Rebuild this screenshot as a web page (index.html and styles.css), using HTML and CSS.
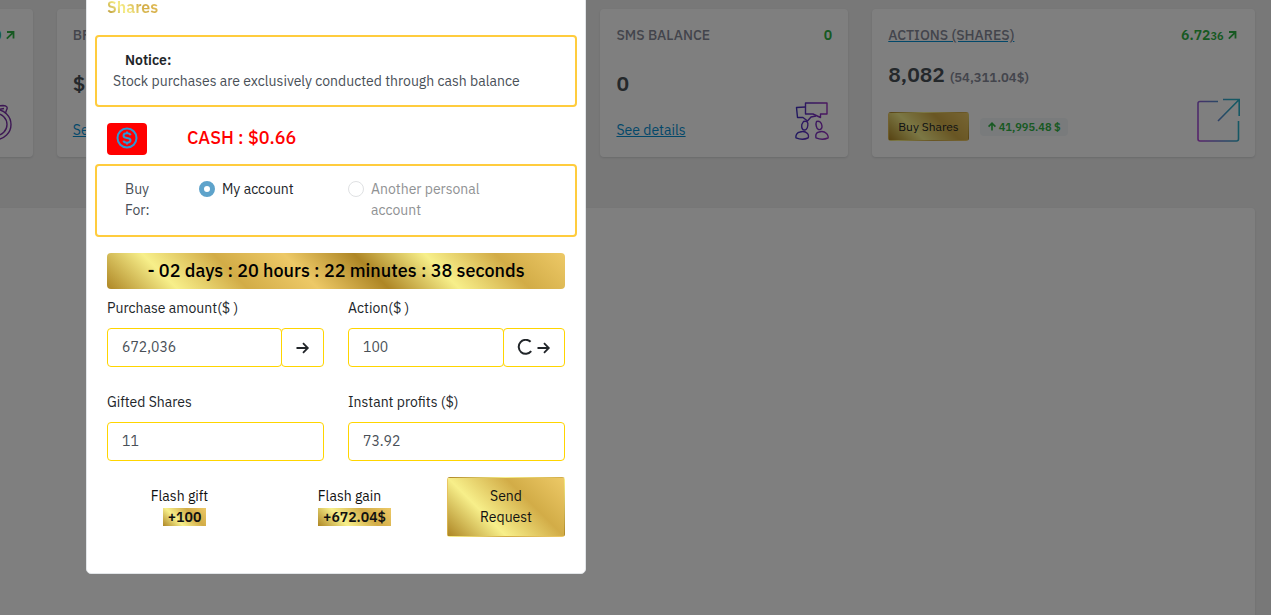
FILE: index.html
```html
<!DOCTYPE html>
<html lang="en">
<head>
<meta charset="utf-8">
<meta name="viewport" content="width=device-width, initial-scale=1">
<title>Shares</title>
<link rel="stylesheet" href="styles.css">
</head>
<body>
<svg class="defs" aria-hidden="true">
  <symbol id="arrow-right" viewBox="0 0 14 14"><path d="M1 7h11M7.500 2.200 12.300 7l-4.800 4.800" fill="none" stroke="currentColor" stroke-width="1.8"/></symbol>
  <symbol id="arrow-ne" viewBox="0 0 12 10"><path d="M2 2h6.500v6.500M8.200 2.300 1.800 8.700" fill="none" stroke="currentColor" stroke-width="1.8"/></symbol>
  <symbol id="arrow-up" viewBox="0 0 10 10"><path d="M5 9.500V1.500M1.200 5.200 5 1.400l3.800 3.800" fill="none" stroke="currentColor" stroke-width="1.8"/></symbol>
</svg>
<main class="page">
  <section class="stats">
    <article class="card">
      <header class="card-head end"><span class="trend">0 <svg class="trend-icon"><use href="#arrow-ne"/></svg></span></header>
      <footer class="card-foot end">
        <svg class="card-icon medal" viewBox="0 0 42 42" fill="none" stroke="#7a2fa8" stroke-width="1.4"><circle cx="21" cy="25.500" r="15"/><circle cx="21" cy="25.500" r="11"/><path d="M17 11C17 7.500 19 6.500 23 7L28 6.500C32 6.500 33 8.500 31.500 11L30.500 14M20 11 29 9.500"/></svg>
      </footer>
    </article>
    <article class="card">
      <header class="card-head"><h2 class="card-title">BFS</h2></header>
      <p class="amount">$</p>
      <footer class="card-foot"><a href="#">See</a></footer>
    </article>
    <article class="card"></article>
    <article class="card">
      <header class="card-head"><h2 class="card-title">SMS BALANCE</h2><span class="trend">0</span></header>
      <p class="amount">0</p>
      <footer class="card-foot"><a href="#">See details</a>
        <svg class="card-icon" viewBox="0 0 42 42" fill="none" stroke="url(#chat)" stroke-width="1.4" stroke-linejoin="round">
          <defs><linearGradient id="chat" gradientUnits="userSpaceOnUse" x1="4" y1="0" x2="38" y2="0"><stop offset="0" stop-color="#3a2fc0"/><stop offset="1" stop-color="#9a30c0"/></linearGradient></defs>
          <path d="M15.500 4H37V15H30.500L30.500 18.500 23 15H15.500Z"/>
          <path d="M15.500 8 6.500 8.500 7.500 18.500H13L17.500 22 21 18 26 17"/>
          <path d="M13.500 22.500C16.500 21.500 18.500 23 17.800 26.500 17.500 30 15.500 31.500 13.500 30.800 11.500 30 11.500 28 11.800 25.500Z"/>
          <path d="M26.500 22.500C29.500 21.500 31.500 23.500 32 27 32.300 29.500 30.500 31 28.500 30.500 26.500 30 25.300 25 26.500 22.500Z"/>
          <path d="M10 33C13 32 16 33 17.500 34.500 19 36 18.500 38.500 18 39 14 40.800 9.500 40.300 6 38.800 5.500 36 7 33.500 10 33Z"/>
          <path d="M29 33C32 32 35 33 36.500 34.500 38 36 38.500 38.500 38 39 34 40.800 29.500 40.300 26 38.800 25.500 36 26 33.500 29 33Z"/>
        </svg>
      </footer>
    </article>
    <article class="card">
      <header class="card-head"><h2 class="card-title"><a class="title-link" href="#">ACTIONS (SHARES)</a></h2><span class="trend">6.72<small>36</small> <svg class="trend-icon"><use href="#arrow-ne"/></svg></span></header>
      <p class="amount shares">8,082 <span class="amount-note">(54,311.04$)</span></p>
      <footer class="card-foot">
        <div class="share-actions"><button class="gold buy" type="button">Buy Shares</button><span class="badge"><svg class="badge-icon"><use href="#arrow-up"/></svg>41,995.48 $</span></div>
        <svg class="share-icon" viewBox="0 0 46 46" fill="none" stroke="url(#share)" stroke-width="1.6">
          <defs><linearGradient id="share" gradientUnits="userSpaceOnUse" x1="2" y1="34" x2="42" y2="24"><stop offset="0" stop-color="#b045d8"/><stop offset="1" stop-color="#2bb0c8"/></linearGradient></defs>
          <path d="M25 6.500H7Q5 6.500 5 8.500V44Q5 46 7 46H43.500Q45.500 46 45.500 44V26M30 4.500H46.200V21M46 4.800 25 26"/>
        </svg>
      </footer>
    </article>
  </section>
  <section class="panel"></section>
</main>

<div class="backdrop">
  <form class="modal" role="dialog" aria-labelledby="modal-title">
    <h1 class="modal-title"><span class="gold-text" id="modal-title">Shares</span></h1>
    <div class="box notice"><strong class="notice-title">Notice:</strong><p class="notice-text">Stock purchases are exclusively conducted through cash balance</p></div>
    <div class="cash">
      <span class="cash-icon"><svg class="coin" viewBox="0 0 24 24" fill="none" stroke="#2b9ad6" stroke-width="2"><circle cx="12" cy="12" r="9.500"/><path d="M15.500 9.200C15.200 7.900 14 7.300 12 7.300S8.500 8.200 8.500 9.700 9.800 11.700 12 12 15.500 12.800 15.500 14.300 14 16.700 12 16.700 8.700 16.100 8.500 14.700M12 5.500V7.500M12 16.500V18.500"/></svg></span>
      <strong class="cash-value">CASH : $0.66</strong>
    </div>
    <fieldset class="box buy-for" aria-label="Buy for">
      <span class="buy-label">Buy For:</span>
      <label class="choice mine"><input class="radio" type="radio" name="account" checked>My account</label>
      <label class="choice other"><input class="radio" type="radio" name="account" disabled>Another personal account</label>
    </fieldset>
    <div class="gold-band">- 02 days : 20 hours : 22 minutes : 38 seconds</div>
    <div class="fields">
      <div class="field"><label for="purchase">Purchase amount($ )</label><div class="group"><input class="control" id="purchase" value="672,036"><button class="addon" type="button" aria-label="Convert amount"><svg class="go"><use href="#arrow-right"/></svg></button></div></div>
      <div class="field"><label for="action">Action($ )</label><div class="group"><input class="control" id="action" value="100"><button class="addon" type="button" aria-label="Convert shares"><svg class="spinner" viewBox="0 0 16 18"><path d="M13.600 2.800A7 7 0 1 0 14.200 12.200" fill="none" stroke="currentColor" stroke-width="2"/></svg><svg class="go"><use href="#arrow-right"/></svg></button></div></div>
      <div class="field"><label for="gifted">Gifted Shares</label><div class="group"><input class="control" id="gifted" value="11"></div></div>
      <div class="field"><label for="profit">Instant profits ($)</label><div class="group"><input class="control" id="profit" value="73.92"></div></div>
    </div>
    <div class="summary">
      <div class="flash">Flash gift<b class="flash-value">+100</b></div>
      <div class="flash">Flash gain<b class="flash-value">+672.04$</b></div>
      <button class="gold send" type="submit">Send Request</button>
    </div>
  </form>
</div>
</body>
</html>
```
FILE: styles.css
```css
* { box-sizing: border-box; }
body {
  margin: 0;
  height: 100vh;
  overflow: hidden;
  background: #f0f0f0;
  color: #212529;
  font: 14px/21px "IBM Plex Sans", Inter, "Noto Sans", sans-serif;
}
h1, h2, p { margin: 0; }
button, input { font: inherit; color: inherit; }
a { color: #0590d4; }
.defs { position: absolute; width: 0; height: 0; }

.page {
  display: flex;
  flex-direction: column;
  height: 100vh;
  margin-left: -215px;
  padding: 9px 16px 0 0;
}
.stats {
  display: grid;
  grid-template-columns: repeat(4, 248fr) 383fr;
  gap: 24px;
  margin-bottom: 51px;
}
.card, .panel { background: #fff; border-radius: 4px; box-shadow: 0 1px 2px rgba(56, 65, 74, .15); }
.card {
  display: flex;
  flex-direction: column;
  justify-content: space-between;
  height: 148px;
  padding: 16px;
}
.panel { flex: 1; border-radius: 0 4px 0 0; }
.card-head, .card-foot { display: flex; justify-content: space-between; }
.end { justify-content: flex-end; }
.card-title { color: #878a99; font-size: 14px; font-weight: 500; white-space: nowrap; }
.title-link { color: inherit; text-decoration-color: #0590d4; }
.trend { color: #2fb344; font-weight: 600; }
.trend small { font-size: 11px; }
.trend-icon { width: 12px; height: 10px; }
.amount { margin-top: 20px; font-size: 21px; line-height: 24px; font-weight: 600; color: #495057; }
.amount.shares { margin-top: 6px; }
.amount-note { font-size: 13px; color: #878a99; }
.card-foot { height: 42px; align-items: flex-end; }
.card-icon { width: 42px; height: 42px; }
.share-actions { display: flex; align-items: center; gap: 11px; }
.share-icon { width: 46px; height: 46px; overflow: visible; }
.badge {
  padding: 2px 7px;
  border-radius: 4px;
  background: #f3f6f9;
  color: #2fb344;
  font-size: 11px;
  line-height: 14px;
  font-weight: 600;
}
.badge-icon { width: 10px; height: 9px; margin-right: 2px; }

.gold, .flash-value, .gold-text { background-image: linear-gradient(45deg, #ae8625, #f7ef8a, #d2ac47, #edc967); }
.gold { border: 1px solid transparent; border-radius: 3px; cursor: pointer; }
.buy { height: 29px; padding: 0 9px; font-size: 12px; line-height: 18px; }

.backdrop { position: fixed; inset: 0; overflow: hidden; background: rgba(0, 0, 0, .5); }
.modal {
  width: 500px;
  margin: -24px 0 0 86px;
  padding: 20px 20px 36px;
  border: 1px solid #e2e5e8;
  border-radius: 5px;
  background: #fff;
}
.modal-title { margin-bottom: 17px; font-size: 16px; line-height: 21px; font-weight: 600; }
.gold-text { background-clip: text; -webkit-background-clip: text; color: transparent; }
.box { margin: 0 -12px; border: 2px solid #ffcc3d; border-radius: 4px; }
.notice { padding: 13px 16px; }
.notice-title { margin-left: 12px; font-weight: 600; }
.notice-text { color: #495057; }
.cash { display: flex; align-items: flex-start; gap: 40px; margin: 16px 0 9px; }
.cash-icon { display: flex; padding: 3px 8px 5px; border-radius: 4px; background: #f00; }
.coin { width: 24px; height: 24px; }
.cash-value { color: #f00; font-size: 18px; line-height: 30px; font-weight: 500; }
.buy-for { display: flex; padding: 13px 28px 14px; color: #495057; }
.buy-label { width: 32px; margin-right: 42px; }
.choice { display: flex; align-items: flex-start; gap: 7px; color: #212529; }
.mine { width: 149px; }
.other { width: 150px; color: #909294; }
.radio { appearance: none; flex: none; width: 16px; height: 16px; margin: 2px 0 0; border: 1px solid #dfe1e3; border-radius: 50%; background: #fff; }
.radio:checked { border: 5px solid #5ea3cb; }
.gold-band {
  margin: 16px 0 9px;
  border-radius: 4px;
  background: linear-gradient(45deg, #ae8625, #f7ef8a, #d2ac47, #edc967, #ae8625, #f7ef8a, #d2ac47, #edc967);
  color: #000;
  font-size: 18px;
  line-height: 36px;
  font-weight: 500;
  text-align: center;
}
.fields { display: grid; grid-template-columns: 1fr 1fr; gap: 25px 24px; }
.field { display: flex; flex-direction: column; gap: 9px; min-width: 0; }
.group { display: flex; height: 39px; }
.control { flex: 1; min-width: 0; padding: 0 14px; border: 1px solid #ffd500; border-radius: 4px; background: #fff; color: #495057; }
.addon { display: flex; align-items: center; gap: 3px; margin-left: -1px; padding: 0 13px; border: 1px solid #ffd500; border-radius: 4px; background: #fff; }
.go { width: 15px; height: 14px; }
.spinner { width: 16px; height: 18px; }
.summary { display: flex; align-items: center; justify-content: space-between; margin-top: 16px; color: #111; }
.flash { display: flex; flex-direction: column; align-items: center; width: 145px; }
.flash-value { padding: 0 5px; margin: 1px 0 2px 10px; line-height: 18px; font-weight: 600; }
.send { width: 118px; padding: 8px 28px; line-height: 21px; }
```
